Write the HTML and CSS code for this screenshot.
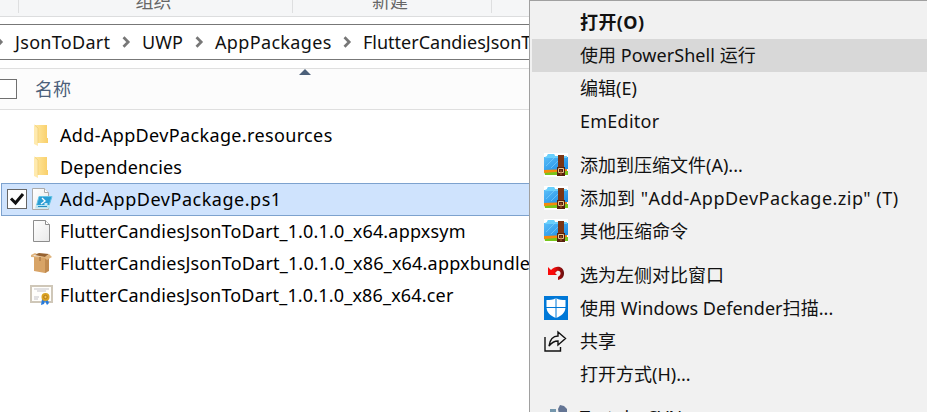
FILE: index.html
```html
<!DOCTYPE html>
<html lang="zh-CN">
<head>
<meta charset="utf-8">
<title>AppPackages</title>
<link rel="stylesheet" href="styles.css">
</head>
<body>
<svg class="defs" width="0" height="0">
  <defs>
    <linearGradient id="gold" x1="0" x2="1"><stop offset="0" stop-color="#ffe8a0"/><stop offset="1" stop-color="#f9cf6a"/></linearGradient>
    <linearGradient id="blue" x1="0" y1="0" x2="1" y2="1"><stop offset="0" stop-color="#62c4fb"/><stop offset="1" stop-color="#1687e2"/></linearGradient>
    <linearGradient id="paper" x1="0" y1="0" x2="1" y2="1"><stop offset="0" stop-color="#fff"/><stop offset="1" stop-color="#e9e9e9"/></linearGradient>
    <linearGradient id="red" x1="0" x2="1"><stop offset=".35" stop-color="#fa0a0a"/><stop offset="1" stop-color="#5e1010"/></linearGradient>
    <symbol id="folder" viewBox="0 0 24 24"><path d="M6 2h12v13h1v5H6z" fill="url(#gold)"/><path d="M5 2l4 3v18l-4-2z" fill="#ffeaae"/><path d="M9 20V5L5.500 2" fill="none" stroke="#eac66e" stroke-width=".6"/></symbol>
    <symbol id="archive" viewBox="0 0 24 24"><path d="M0 0h24v24H0z" fill="#fff"/><path d="M0 18h24v4H1z" fill="#78c51c"/><path d="M0 16l23-1v3L0 20z" fill="#f58a0c"/><path d="M0 4h3l1-3h6l1 3h13v12L0 17z" fill="url(#blue)"/><path d="M3 3l1-2h6l1 2h12v2H1V4z" fill="#68cffc"/><path d="M2 13L11 4M7 15l7-7" stroke="#8bd7ff" stroke-width=".8" opacity=".7"/><path d="M14 2h6v14h-6z" fill="#7b3514"/><path d="M13 14h8v9h-8z" fill="#56210d"/><path d="M14.500 15.500h5v4h-5z" fill="none" stroke="#e8c38b"/><path d="M16.500 17h1v5h-1z" fill="#b56932"/></symbol>
    <symbol id="chevron" viewBox="0 0 9 12"><path d="M1.500 1.200l4.700 4.800-4.700 4.800" fill="none" stroke="#777" stroke-width="2.700"/></symbol>
  </defs>
</svg>
<div class="window">
  <main class="explorer">
    <div class="ribbon"><div class="group organise"><span>组织</span></div><div class="group create"><span>新建</span></div></div>
    <div class="address">
      <svg class="chevron first"><use href="#chevron"/></svg>
      <span class="crumb c1">JsonToDart</span>
      <svg class="chevron"><use href="#chevron"/></svg>
      <span class="crumb c2">UWP</span>
      <svg class="chevron"><use href="#chevron"/></svg>
      <span class="crumb c3">AppPackages</span>
      <svg class="chevron"><use href="#chevron"/></svg>
      <span class="crumb c4">FlutterCandiesJsonToDart</span>
    </div>
    <div class="columns"><i class="all"></i><span>名称</span><i class="sort"></i></div>
    <div class="files">
      <div class="file"><svg class="icon"><use href="#folder"/></svg><span class="f1">Add-AppDevPackage.resources</span></div>
      <div class="file"><svg class="icon"><use href="#folder"/></svg><span class="f2">Dependencies</span></div>
      <div class="file selected"><span class="check"><svg viewBox="0 0 18 18"><path d="M3 8.500l4.500 4.500 7.500-9"/></svg></span>
        <svg class="icon" viewBox="0 0 24 24"><path d="M3.500 1.500h12l4 4v17h-16z" fill="url(#paper)" stroke="#aaa"/><path d="M15.500 1.500v4h4" fill="#fff" stroke="#aaa"/><path d="M10 9.500h13l-3 9H7.500z" fill="#2a9ed5" stroke="#66c4e5"/><path d="M13 11l3 3-4 3M15.500 17h3" fill="none" stroke="#fff" stroke-width="1.300"/><path d="M7 18h14v3.500H6z" fill="#b8e3f1"/><path d="M9 19.500h9" stroke="#268fc3"/></svg><span class="f3">Add-AppDevPackage.ps1</span></div>
      <div class="file"><svg class="icon" viewBox="0 0 24 24"><path d="M4.500 1.500h12l4 4v17h-16z" fill="url(#paper)" stroke="#8d8d8d"/><path d="M16.500 1.500v4h4" fill="#fff" stroke="#8d8d8d"/></svg><span class="f4">FlutterCandiesJsonToDart_1.0.1.0_x64.appxsym</span></div>
      <div class="file"><svg class="icon" viewBox="0 0 24 24"><path d="M5 6l13-1v16l-2 1-11-2z" fill="#d8a467"/><path d="M16 8l4-3v15l-4 2z" fill="#c18b50"/><path d="M5 4l5-2 10 1-4 3z" fill="#976331"/><path d="M2 4l4-2 2 1-4 2 12 1 4-3 3 3-5 3-2-2-14-1z" fill="#e0b57e"/><path d="M10 6h2v4h-2z" fill="#b98751"/></svg><span class="f5">FlutterCandiesJsonToDart_1.0.1.0_x86_x64.appxbundle</span></div>
      <div class="file"><svg class="icon" viewBox="0 0 24 24"><path d="M2 3h21v16H2z" fill="#fffefb" stroke="#cfc7b8" stroke-width="2"/><path d="M5 6h15M8 8h9M5 14h5M5 16h4" stroke="#aaa9b3" stroke-width=".7"/><path d="M13 16l-1 6 3-1 1-3 2 4 2-2-2-5" fill="#267bdc"/><circle cx="16.500" cy="14" r="4" fill="#daa322"/><circle cx="16.500" cy="14" r="1.700" fill="#f2c650" stroke="#b57817"/></svg><span class="f6">FlutterCandiesJsonToDart_1.0.1.0_x86_x64.cer</span></div>
    </div>
  </main>
  <aside class="menu">
    <div class="item bold"><i class="slot"></i><span class="m1">打开(O)</span></div>
    <div class="item active"><i class="slot"></i><span class="m2">使用 PowerShell 运行</span></div>
    <div class="item"><i class="slot"></i><span class="m3">编辑(E)</span></div>
    <div class="item"><i class="slot"></i><span class="m4">EmEditor</span></div>
    <div class="item section"><svg class="slot"><use href="#archive"/></svg><span class="m5">添加到压缩文件(A)...</span></div>
    <div class="item"><svg class="slot"><use href="#archive"/></svg><span class="m6">添加到 "Add-AppDevPackage.zip" (T)</span></div>
    <div class="item"><svg class="slot"><use href="#archive"/></svg><span class="m7">其他压缩命令</span></div>
    <div class="item section"><svg class="slot" viewBox="0 0 24 24"><path d="M4 4l3 3c6-6 13-3 13 3 0 4-2 6-6 7v-3c4-2 3-7-1-6l-2 2 2 2H4z" fill="url(#red)"/></svg><span class="m8">选为左侧对比窗口</span></div>
    <div class="item"><svg class="slot" viewBox="0 0 24 24"><path d="M0 0h24v24H0z" fill="#0078d7"/><path d="M12 2c3 2 6 2 9.500 2v7c0 6-4.500 9-9.500 11-5-2-9.500-5-9.500-11V4c3.500 0 6.500 0 9.500-2z" fill="#fff"/><path d="M12 2v20M2 11.500h20" stroke="#0078d7"/></svg><span class="m9">使用 Windows Defender扫描...</span></div>
    <div class="item"><svg class="slot" viewBox="0 0 24 24"><path d="M1 8v14h15.500v-4M5 17c1-7 5-10 9-10V3l7.500 6.500L14 16v-4c-4 0-6 1-9 5z" fill="none" stroke="#111" stroke-width="1.400"/></svg><span class="m10">共享</span></div>
    <div class="item"><i class="slot"></i><span class="m11">打开方式(H)...</span></div>
    <div class="item last"><svg class="slot" viewBox="0 0 24 24"><path d="M6 4h6v5H6z" fill="#7597ad"/><path d="M14 4l2-4 4 1 3 3v5h-8z" fill="#647594"/></svg><span class="m12">TortoiseSVN</span></div>
  </aside>
</div>
</body>
</html>
```
FILE: styles.css
```css
* { box-sizing: border-box; }
body { margin: 0; overflow: hidden; font: 18px/26px "Noto Sans", "Noto Sans CJK SC", sans-serif; color: #111; background: #fff; }
.defs { position: absolute; }
.window { display: grid; grid-template-columns: 529px 398px; width: 927px; height: 412px; overflow: hidden; }
.explorer { overflow: hidden; min-width: 0; }
span { white-space: nowrap; }
.ribbon { display: flex; height: 17px; padding-left: 18px; background: #f5f6f7; border-bottom: 1px solid #dcddde; }
.group { display: flex; justify-content: center; align-items: flex-end; height: 13px; border-left: 1px solid #dedfe0; color: #666; }
.group span { margin-bottom: -1px; }
.organise { width: 274px; padding-right: 4px; }
.create { width: 200px; padding-right: 4px; border-right: 1px solid #dedfe0; }
.address { display: flex; align-items: center; height: 36px; margin-top: 7px; border-top: 1px solid #777; border-bottom: 1px solid #777; }
.address .crumb { margin-top: -1px; }
.chevron { flex: none; width: 9px; height: 12px; margin: 0 11px; }
.chevron.first { margin-left: -5px; margin-right: 11px; }
.crumb { flex: none; }
.c1 { width: 96px; letter-spacing: .3px; }
.c2 { width: 42px; }
.c3 { width: 117px; letter-spacing: .35px; }
.columns { position: relative; display: flex; align-items: center; height: 42px; margin-top: 8px; background: #fcfcfc; border-top: 1px solid #dfdfdf; border-bottom: 1px solid #dfdfdf; color: #4c607a; }
.columns span { margin-top: -1px; }
.all { width: 17px; height: 20px; margin-right: 18px; border: 1px solid #707070; border-left: 0; background: #fff; }
.sort { position: absolute; left: 299px; top: 0; border: 6px solid transparent; border-top: 0; border-bottom-color: #4c607a; }
.files { padding-top: 9px; }
.file { display: flex; align-items: center; height: 32px; padding-left: 29px; color: #000; }
.icon { flex: none; width: 24px; height: 24px; margin-right: 7px; }
.f1 { letter-spacing: .36px; }
.f2 { letter-spacing: .17px; }
.f3 { letter-spacing: .53px; }
.f4 { letter-spacing: .18px; }
.f5 { letter-spacing: .19px; }
.f6 { letter-spacing: .17px; }
.selected { height: 33px; margin: 0 0 -1px 1px; padding: 0 0 1px 5px; background: #cfe3fd; border: 1px solid #7da2ce; border-right: 0; }
.check { flex: none; width: 20px; height: 20px; margin-right: 2px; border: 1px solid #666; background: #fff; }
.check svg { display: block; width: 18px; height: 18px; fill: none; stroke: #111; stroke-width: 3; }
.menu { border-left: 1px solid #a0a0a0; border-top: 1px solid #a0a0a0; background: #f1f1f1; padding: 5px 0 0 2px; overflow: hidden; }
.item { display: flex; align-items: center; height: 33px; padding-left: 12px; }
.item span { margin-top: -2px; }
.item.active { background: #d8d8d8; }
.item.section { margin-top: 11px; }
.item.last { margin-top: 10px; }
.bold { font-weight: 700; }
.m1 { letter-spacing: .4px; }
.m2, .m9 { letter-spacing: .05px; }
.m4 { letter-spacing: .25px; }
.m6 { letter-spacing: .49px; }
.slot { flex: none; width: 24px; height: 24px; margin: -1px 12px 0 0; }
```
